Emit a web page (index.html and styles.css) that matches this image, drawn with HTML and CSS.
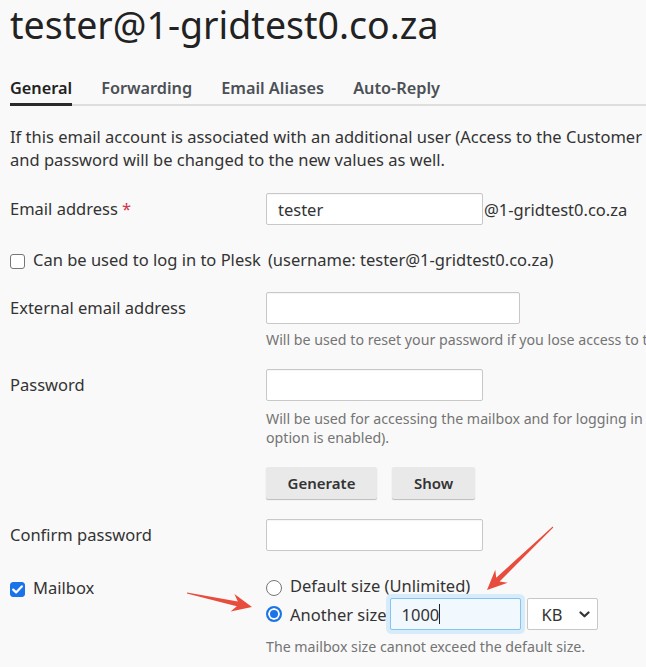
FILE: index.html
```html
<!DOCTYPE html>
<html lang="en">
<head>
<meta charset="utf-8">
<title>tester@1-gridtest0.co.za</title>
<link rel="stylesheet" href="styles.css">
</head>
<body>
<div class="page">
  <h1 class="title">tester@1-gridtest0.co.za</h1>

  <nav class="tabs">
    <a class="tab is-active">General</a>
    <a class="tab">Forwarding</a>
    <a class="tab">Email Aliases</a>
    <a class="tab">Auto-Reply</a>
  </nav>

  <p class="intro">If this email account is associated with an additional user (Access to the Customer Panel is enabled), the username<br>and password will be changed to the new values as well.</p>

  <div class="row row-email">
    <div class="label">Email address <span class="req">*</span></div>
    <div class="field field-inline">
      <input class="input w-217" type="text" value="tester">
      <span class="suffix">@1-gridtest0.co.za</span>
    </div>
  </div>

  <div class="check-row">
    <span class="cb"></span>
    <span class="check-text">Can be used to log in to Plesk</span>
    <span class="check-note">(username: tester@1-gridtest0.co.za)</span>
  </div>

  <div class="row row-ext">
    <div class="label">External email address</div>
    <div class="field">
      <input class="input w-254" type="text">
      <div class="hint hint-ext">Will be used to reset your password if you lose access to the mailbox.</div>
    </div>
  </div>

  <div class="row row-pass">
    <div class="label">Password</div>
    <div class="field">
      <input class="input w-217" type="password">
      <div class="hint hint-pass">Will be used for accessing the mailbox and for logging in to Plesk (if the corresponding<br>option is enabled).</div>
    </div>
  </div>

  <div class="row row-buttons">
    <div class="label"></div>
    <div class="field buttons">
      <button class="btn btn-generate" type="button">Generate</button>
      <button class="btn btn-show" type="button">Show</button>
    </div>
  </div>

  <div class="row row-confirm">
    <div class="label">Confirm password</div>
    <div class="field">
      <input class="input w-217" type="password">
    </div>
  </div>

  <div class="row row-mailbox">
    <div class="label label-check">
      <span class="cb cb-on">
        <svg width="11" height="9" viewBox="0 0 11 9"><path d="M1.2 4.6 L4.1 7.4 L9.8 1.4" fill="none" stroke="#fff" stroke-width="2.2" stroke-linecap="round" stroke-linejoin="round"/></svg>
      </span>
      <span>Mailbox</span>
    </div>
    <div class="field">
      <div class="radio-line">
        <span class="radio"></span>
        <span>Default size (Unlimited)</span>
      </div>
      <div class="radio-line radio-line-size">
        <span class="radio radio-on"></span>
        <span class="radio-text">Another size</span>
        <div class="size-input">1000<span class="caret"></span></div>
        <div class="select">
          <span>KB</span>
          <svg class="chev" width="11" height="7" viewBox="0 0 11 7"><path d="M1.5 1.5 L5.5 5.3 L9.5 1.5" fill="none" stroke="#333" stroke-width="2.2" stroke-linecap="round" stroke-linejoin="round"/></svg>
        </div>
      </div>
      <div class="hint hint-size">The mailbox size cannot exceed the default size.</div>
    </div>
  </div>

  <svg class="annotations" width="646" height="667" viewBox="0 0 646 667">
    <polygon fill="#e84c3d" points="187.1,592.5 237.8,601.4 234.4,594.0 252,607 230.6,611.6 236.8,606.2 186.9,593.5"/>
    <polygon fill="#e84c3d" points="552.7,526.6 496.2,577.8 495.3,569.7 487,590 507.7,582.7 499.6,581.4 553.3,527.4"/>
  </svg>
</div>
</body>
</html>
```

FILE: styles.css
```css
html, body {
  margin: 0;
  padding: 0;
  overflow: hidden;
}

body {
  background: #f9f9f9;
  font-family: "Noto Sans", "Open Sans", sans-serif;
  font-size: 16.5px;
  color: #333;
}

.page {
  position: relative;
  width: 900px;
  padding-left: 10px;
  height: 667px;
}

.title {
  margin: 0;
  font-size: 37.5px;
  line-height: 50px;
  font-weight: 400;
  color: #222;
  white-space: nowrap;
}

.tabs {
  display: flex;
  gap: 29px;
  margin-top: 27px;
  border-bottom: 2px solid #dedede;
}

.tab {
  font-size: 16.3px;
  line-height: 23px;
  font-weight: 600;
  color: #4b5056;
  padding-bottom: 3px;
  border-bottom: 3px solid transparent;
  margin-bottom: -2px;
}

.tab.is-active {
  color: #222;
  border-bottom-color: #2a2a2a;
}

.intro {
  margin: 19px 0 22px;
  line-height: 23px;
  white-space: nowrap;
  color: #333;
}

.row {
  display: grid;
  grid-template-columns: 256px auto;
  align-items: start;
}

.label {
  padding-top: 3.5px;
  line-height: 23px;
  color: #333;
}

.req {
  color: #d0364c;
}

.field {
  display: flex;
  flex-direction: column;
  align-items: flex-start;
}

.field-inline {
  flex-direction: row;
  align-items: center;
}

.input {
  box-sizing: border-box;
  height: 32px;
  border: 1px solid #c8c8c8;
  border-radius: 2px;
  background: #fff;
  box-shadow: inset 0 1px 1px rgba(0, 0, 0, 0.04);
  padding: 0 11px;
  font-family: "Noto Sans", "Open Sans", sans-serif;
  font-size: 16.5px;
  color: #333;
  outline: none;
}

.w-217 { width: 217px; }
.w-254 { width: 254px; }

.suffix {
  margin-left: 1px;
  line-height: 23px;
}

.check-row {
  display: flex;
  align-items: flex-start;
  margin-top: 23px;
  line-height: 23px;
}

.cb {
  box-sizing: border-box;
  flex: none;
  width: 15px;
  height: 15px;
  margin-top: 6px;
  margin-right: 8px;
  border: 1px solid #767676;
  border-radius: 3px;
  background: #fff;
  display: flex;
  align-items: center;
  justify-content: center;
}

.cb-on {
  border-color: #1a73e8;
  background: #1a73e8;
}

.check-note {
  margin-left: 7px;
}

.row-ext { margin-top: 21px; }

.hint {
  font-size: 14.2px;
  line-height: 19px;
  color: #747474;
  white-space: nowrap;
}

.hint-ext { margin-top: 6px; }

.row-pass { margin-top: 20px; }
.hint-pass { margin-top: 8px; }

.row-buttons { margin-top: 20px; }

.buttons {
  flex-direction: row;
  gap: 15px;
}

.btn {
  height: 32px;
  border: none;
  border-radius: 2px;
  background: #e9e9e9;
  box-shadow: 0 1px 1px rgba(0, 0, 0, 0.25);
  font-family: "Noto Sans", "Open Sans", sans-serif;
  font-size: 15px;
  font-weight: 600;
  color: #333;
  padding: 0;
}

.btn-generate { width: 111px; }
.btn-show { width: 83px; }

.row-confirm { margin-top: 20px; }

.row-mailbox { margin-top: 23px; }

.label-check {
  display: flex;
  align-items: flex-start;
  padding-top: 2px;
}

.radio-line {
  display: flex;
  align-items: flex-start;
  line-height: 23px;
}

.radio {
  box-sizing: border-box;
  flex: none;
  width: 16px;
  height: 16px;
  margin-top: 6px;
  margin-right: 8px;
  border: 1px solid #767676;
  border-radius: 50%;
  background: #fff;
}

.radio-on {
  margin-top: 0;
  border: 2px solid #1a73e8;
  background: #1a73e8;
  box-shadow: inset 0 0 0 2px #fff;
}

.radio-line-size {
  align-items: center;
  margin-top: 1px;
  height: 32px;
}

.size-input {
  box-sizing: border-box;
  display: flex;
  align-items: center;
  width: 131px;
  height: 32px;
  margin-left: 3px;
  padding-left: 11px;
  border: 1px solid #86c3ee;
  border-radius: 2px;
  background: #f1f8fe;
  box-shadow: 0 0 0 4px #d6ecfb;
  line-height: 23px;
}

.caret {
  width: 1px;
  height: 20px;
  background: #222;
}

.select {
  box-sizing: border-box;
  display: flex;
  align-items: center;
  justify-content: space-between;
  width: 71px;
  height: 32px;
  margin-left: 6px;
  padding: 0 7px 0 14px;
  border: 1px solid #c8c8c8;
  border-radius: 2px;
  background: #fff;
  line-height: 23px;
}

.hint-size { margin-top: 7px; }

.annotations {
  position: absolute;
  left: 0;
  top: 0;
  pointer-events: none;
}
```
